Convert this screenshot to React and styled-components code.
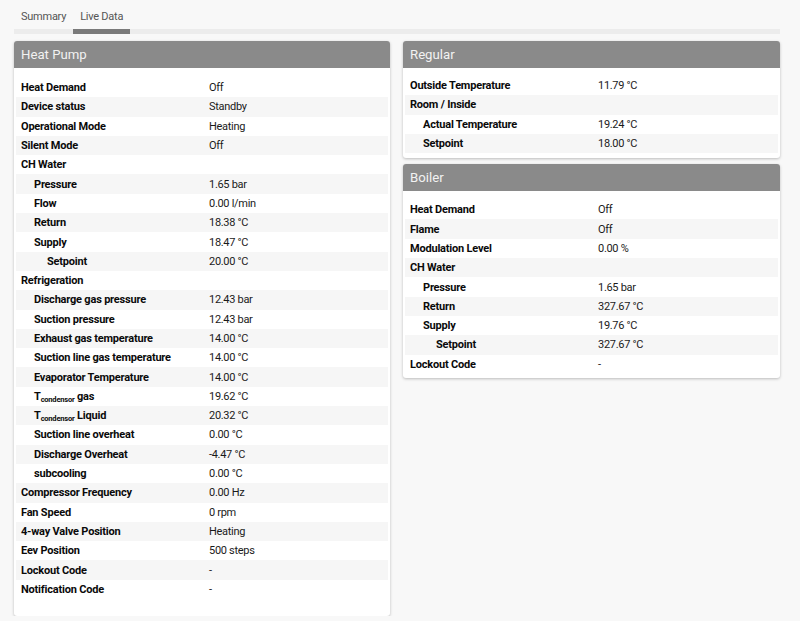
import React from "react";
import styled, { createGlobalStyle } from "styled-components";

const Global = createGlobalStyle`
  html, body { margin: 0; padding: 0; background: #f8f8f8; }
  body { font-family: Roboto, Lato, sans-serif; color: #0a0a0a; }
  * { box-sizing: border-box; }
`;

const Page = styled.div`
  padding: 0 20px 0 14px;
`;

const TabBar = styled.div`
  display: flex;
  height: 34px;
  border-bottom: 5px solid #ececec;
  align-items: flex-end;
`;

const Tab = styled.div`
  font-size: 11px;
  letter-spacing: -0.25px;
  color: #555;
  padding: 0 7px 0 7px;
  height: 29px;
  line-height: 34px;
  margin-bottom: -5px;
  border-bottom: 5px solid ${(p) => (p.$active ? "#7a7a7a" : "transparent")};
  box-sizing: content-box;
`;

const Columns = styled.div`
  display: grid;
  grid-template-columns: 376px 377px;
  column-gap: 13px;
  margin-top: 7px;
  align-items: start;
`;

const Stack = styled.div`
  display: flex;
  flex-direction: column;
  gap: 6px;
`;

const Panel = styled.div`
  background: #fff;
  border-radius: 3px;
  box-shadow: 0 1px 3px rgba(0, 0, 0, 0.25);
  overflow: hidden;
`;

const PanelHeader = styled.div`
  background: #8a8a8a;
  color: #f2f2f2;
  font-size: 13.2px;
  height: 27px;
  line-height: 28px;
  padding: 0 7px;
`;

const Table = styled.div`
  padding: ${(p) => p.$pt}px 2px ${(p) => p.$pb}px 2px;
`;

const Row = styled.div`
  display: flex;
  height: 19.3px;
  align-items: center;
  font-size: 11px;
  letter-spacing: -0.2px;
  background: ${(p) => (p.$odd ? "#f6f6f6" : "#fff")};
`;

const Label = styled.div`
  width: 193px;
  flex: none;
  font-weight: 700;
  padding-left: ${(p) => 5 + p.$level * 13}px;
  white-space: nowrap;
`;

const Value = styled.div`
  color: #1a1a1a;
  letter-spacing: -0.3px;
`;

const Sub = styled.sub`
  font-size: 7.5px;
  vertical-align: -2px;
  line-height: 0;
`;

const Tc = ({ rest }) => (
  <>
    T<Sub>condensor</Sub> {rest}
  </>
);

const heatPump = [
  ["Heat Demand", "Off", 0],
  ["Device status", "Standby", 0],
  ["Operational Mode", "Heating", 0],
  ["Silent Mode", "Off", 0],
  ["CH Water", "", 0],
  ["Pressure", "1.65 bar", 1],
  ["Flow", "0.00 l/min", 1],
  ["Return", "18.38 °C", 1],
  ["Supply", "18.47 °C", 1],
  ["Setpoint", "20.00 °C", 2],
  ["Refrigeration", "", 0],
  ["Discharge gas pressure", "12.43 bar", 1],
  ["Suction pressure", "12.43 bar", 1],
  ["Exhaust gas temperature", "14.00 °C", 1],
  ["Suction line gas temperature", "14.00 °C", 1],
  ["Evaporator Temperature", "14.00 °C", 1],
  [<Tc rest="gas" />, "19.62 °C", 1],
  [<Tc rest="Liquid" />, "20.32 °C", 1],
  ["Suction line overheat", "0.00 °C", 1],
  ["Discharge Overheat", "-4.47 °C", 1],
  ["subcooling", "0.00 °C", 1],
  ["Compressor Frequency", "0.00 Hz", 0],
  ["Fan Speed", "0 rpm", 0],
  ["4-way Valve Position", "Heating", 0],
  ["Eev Position", "500 steps", 0],
  ["Lockout Code", "-", 0],
  ["Notification Code", "-", 0],
];

const regular = [
  ["Outside Temperature", "11.79 °C", 0],
  ["Room / Inside", "", 0],
  ["Actual Temperature", "19.24 °C", 1],
  ["Setpoint", "18.00 °C", 1],
];

const boiler = [
  ["Heat Demand", "Off", 0],
  ["Flame", "Off", 0],
  ["Modulation Level", "0.00 %", 0],
  ["CH Water", "", 0],
  ["Pressure", "1.65 bar", 1],
  ["Return", "327.67 °C", 1],
  ["Supply", "19.76 °C", 1],
  ["Setpoint", "327.67 °C", 2],
  ["Lockout Code", "-", 0],
];

const DataPanel = ({ title, rows, pt, pb }) => (
  <Panel>
    <PanelHeader>{title}</PanelHeader>
    <Table $pt={pt} $pb={pb}>
      {rows.map(([l, v, lvl], i) => (
        <Row key={i} $odd={i % 2 === 1}>
          <Label $level={lvl}>{l}</Label>
          <Value>{v}</Value>
        </Row>
      ))}
    </Table>
  </Panel>
);

export default function App() {
  return (
    <Page>
      <Global />
      <TabBar>
        <Tab>Summary</Tab>
        <Tab $active>Live Data</Tab>
      </TabBar>
      <Columns>
        <DataPanel title="Heat Pump" rows={heatPump} pt={10} pb={17} />
        <Stack>
          <DataPanel title="Regular" rows={regular} pt={8} pb={5} />
          <DataPanel title="Boiler" rows={boiler} pt={9} pb={4} />
        </Stack>
      </Columns>
    </Page>
  );
}
